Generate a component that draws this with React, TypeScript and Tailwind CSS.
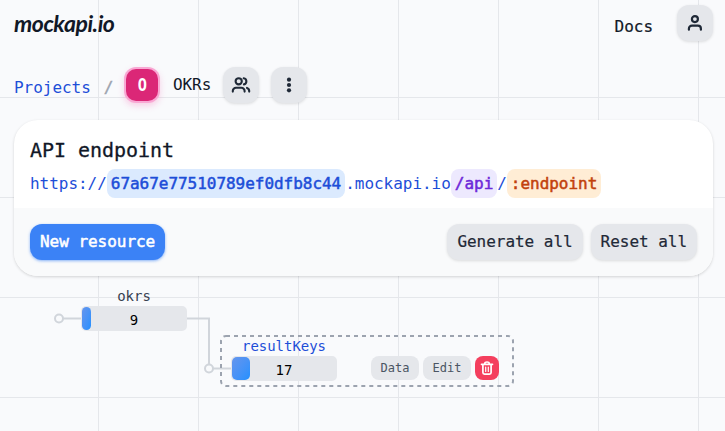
import React from "react";

const iconButton =
  "flex h-9 w-9 shrink-0 items-center justify-center rounded-xl bg-[#e5e7eb] text-[#1f2937] shadow-[0_1px_3px_rgba(0,0,0,0.12)]";
const actionButton =
  "h-9 rounded-xl bg-[#e5e7eb] px-2.5 text-[#1f2937] shadow-[0_1px_3px_rgba(0,0,0,0.12)] [-webkit-text-stroke:0.2px_#1f2937]";

function UserIcon() {
  return (
    <svg width="18" height="20" viewBox="0 0 18 20" fill="none" stroke="currentColor" strokeWidth="2.2" strokeLinecap="round">
      <circle cx="8.9" cy="6.1" r="3" />
      <path d="M2.9 16.7v-1a3 3 0 0 1 3-3h6a3 3 0 0 1 3 3v1" />
    </svg>
  );
}

function UsersIcon() {
  return (
    <svg width="22" height="20" viewBox="0 0 22 20" fill="none" stroke="currentColor" strokeWidth="2.1" strokeLinecap="round">
      <circle cx="8.7" cy="6.3" r="3.1" />
      <path d="M2.8 16.6v-.7a3.2 3.2 0 0 1 3.2-3.2h5.4a3.2 3.2 0 0 1 3.2 3.2v.7" />
      <path d="M13.7 3.3c3.5.4 3.5 5.5.2 6.1M17 12.9c1.4.5 2.2 1.7 2.2 3.2v.5" />
    </svg>
  );
}

function TrashIcon() {
  return (
    <svg width="14" height="16" viewBox="0 0 14 16" fill="none" stroke="white" strokeWidth="1.7" strokeLinecap="round" strokeLinejoin="round">
      <path d="M1.5 4.3h11M4.6 4c0-2.7 4.8-2.7 4.8 0M2.9 4.6v7.9a1.6 1.6 0 0 0 1.6 1.6h5a1.6 1.6 0 0 0 1.6-1.6V4.6" />
      <path d="M5.7 7v4.4M8.3 7v4.4" strokeWidth="1.2" />
    </svg>
  );
}

function Bar({ value, fill }: { value: string; fill: string }) {
  return (
    <div className="relative h-[25px] w-[106px] rounded-[5px] bg-[#e5e7eb] text-center text-[14px] leading-[28px] text-black">
      <span className={`absolute left-px top-px h-[23px] rounded-[5px] bg-gradient-to-br from-[#6495ed] to-[#1e90ff] ${fill}`} />
      {value}
    </div>
  );
}

export default function App() {
  return (
    <div className="relative h-[431px] w-[725px] overflow-hidden bg-[#f9fafc] bg-[linear-gradient(to_right,#e5e7eb_1px,transparent_1px),linear-gradient(to_bottom,#e5e7eb_1px,transparent_1px)] bg-[size:100px_100px] bg-[position:98px_97px] font-['DejaVu_Sans_Mono','Liberation_Mono',monospace] text-[16px] leading-6 tracking-[-0.033px] text-[#111827]">
      <header className="flex h-[52px] items-start justify-between pl-[14px] pr-3 pt-[5px]">
        <div className="w-[102px] whitespace-nowrap font-['Lato',sans-serif] text-[23px] font-bold italic leading-9 tracking-[-0.45px]">mockapi.io</div>
        <div className="flex items-center">
          <a className="mr-6 pt-2 [-webkit-text-stroke:0.2px_#111827]">Docs</a>
          <button className={iconButton}><UserIcon /></button>
        </div>
      </header>

      <nav className="flex h-[68px] items-start pl-[14px] pt-[15px]">
        <a className="mt-[9px] text-[#1d4ed8]">Projects</a>
        <span className="ml-[13px] mt-[9px] text-[#9ca3af] [-webkit-text-stroke:0.4px_#9ca3af]">/</span>
        <span className="ml-[12.5px] mt-[2px] flex h-8 w-8 items-center justify-center rounded-[10px] bg-[#db2777] text-[18px] font-bold text-white shadow-[0_0_0_2px_#f9a8d4,0_3px_6px_2px_rgba(244,114,182,0.3)]">
          <span className="scale-x-[0.85]">O</span>
        </span>
        <span className="ml-[15px] mt-[6px]">OKRs</span>
        <button className={`${iconButton} ml-3`}><UsersIcon /></button>
        <button className={`${iconButton} ml-3`}>
          <svg width="6" height="18" viewBox="0 0 6 18" fill="currentColor">
            <circle cx="3" cy="3.7" r="2.1" /><circle cx="3" cy="9" r="2.1" /><circle cx="3" cy="14.3" r="2.1" />
          </svg>
        </button>
      </nav>

      <main className="ml-[14px] flex h-[156px] w-[699px] flex-col overflow-hidden rounded-3xl bg-white shadow-[0_1px_3px_rgba(0,0,0,0.16)]">
        <section className="h-[88px] px-4 pt-4">
          <h1 className="text-[20px] leading-7 tracking-[-0.041px] [-webkit-text-stroke:0.3px_#111827]">API endpoint</h1>
          <div className="mt-[5px] flex h-[29px] items-center whitespace-nowrap text-[#1d4ed8]">
            <span>https://</span>
            <span className="h-[29px] rounded-lg bg-[#dbeafe] px-1 leading-[29px] [-webkit-text-stroke:0.5px_#1d4ed8]">67a67e77510789ef0dfb8c44</span>
            <span>.mockapi.io</span>
            <span className="h-[29px] rounded-lg bg-[#ede9fe] px-1 leading-[29px] text-[#6d28d9] [-webkit-text-stroke:0.5px_#6d28d9]">/api</span>
            <span>/</span>
            <span className="h-[29px] rounded-lg bg-[#ffedd5] px-1 leading-[29px] text-[#c2410c] [-webkit-text-stroke:0.5px_#c2410c]">:endpoint</span>
          </div>
        </section>
        <footer className="flex h-[68px] items-start gap-2 bg-[#f9fafb] px-4 pt-4">
          <button className="mr-auto h-9 rounded-xl bg-[#3b82f6] px-2.5 text-white shadow-[0_1px_3px_rgba(59,130,246,0.6)] [-webkit-text-stroke:0.5px_white]">New resource</button>
          <button className={actionButton}>Generate all</button>
          <button className={actionButton}>Reset all</button>
        </footer>
      </main>

      <svg className="absolute left-0 top-[276px]" width="725" height="155" viewBox="0 276 725 155" fill="none">
        <path d="M63 318.5H82M187 318.5H209V364M213 368.5H232" stroke="#d1d5db" strokeWidth="2" />
        <circle cx="59" cy="318.5" r="4" fill="#f9fafc" stroke="#d1d5db" strokeWidth="2" />
        <circle cx="209" cy="368.5" r="4" fill="#f9fafc" stroke="#d1d5db" strokeWidth="2" />
        <rect x="221" y="336" width="292" height="50" rx="5" stroke="#9ca3af" strokeWidth="2" strokeDasharray="4 4" />
      </svg>

      <div className="absolute left-[81px] top-[288px] w-[106px] text-center text-[14px]">
        <div className="h-[18px] leading-[17px] text-[#374151]">okrs</div>
        <Bar value="9" fill="w-[9px]" />
      </div>
      <div className="absolute left-[231px] top-[338px] w-[106px] text-center text-[14px]">
        <div className="h-[18px] leading-[17px] text-[#1d4ed8]">resultKeys</div>
        <Bar value="17" fill="w-[18px]" />
      </div>
      <div className="absolute left-[371px] top-[356px] flex gap-1 text-[12px] leading-6 text-[#4b5563]">
        <button className="h-6 w-12 rounded-lg bg-[#e5e7eb]">Data</button>
        <button className="h-6 w-12 rounded-lg bg-[#e5e7eb]">Edit</button>
        <button className="flex h-6 w-6 items-center justify-center rounded-lg bg-[#f43f5e]"><TrashIcon /></button>
      </div>
    </div>
  );
}
